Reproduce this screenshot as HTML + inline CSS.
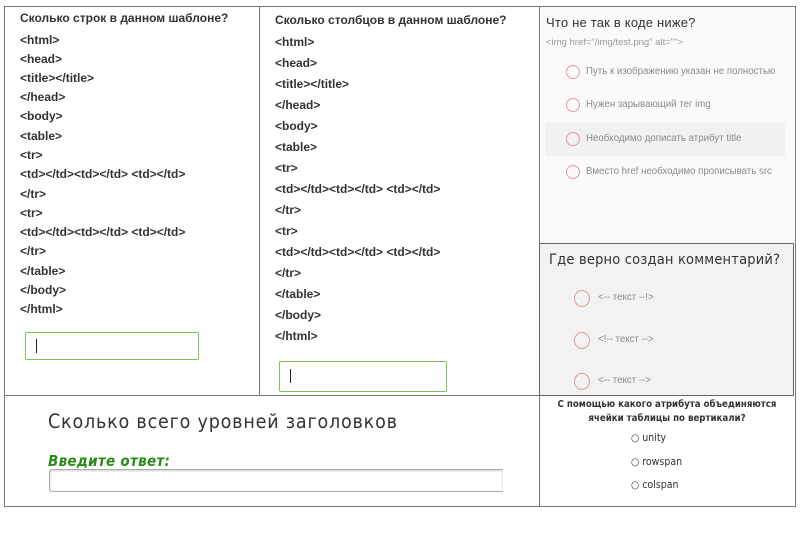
<!DOCTYPE html>
<html><head><meta charset="utf-8"><style>
body{margin:0;width:800px;height:540px;background:#fff;position:relative;font-family:"Liberation Sans",Arial,sans-serif;overflow:hidden}
.a{position:absolute;white-space:nowrap}
.c1{font-weight:bold;font-size:12px;color:#333;left:20px}
.c2{font-weight:bold;font-size:12px;color:#333;left:275px}
.line{position:absolute;background:#777}
.rc{position:absolute;border:1.3px solid #e29a9a;border-radius:50%;box-sizing:border-box}
.ot{font-size:9.7px;color:#8a8a8a}
</style></head><body>
<div style="position:absolute;left:4px;top:6px;width:790px;height:499px;border:1px solid #777"></div>
<div class="line" style="left:259px;top:6px;width:1px;height:390px"></div>
<div class="line" style="left:539px;top:6px;width:1px;height:500px"></div>
<div class="line" style="left:4px;top:395px;width:790px;height:1px"></div>

<div class="a c1" style="top:11px">Сколько строк в данном шаблоне?</div>
<div class="a c1" style="top:33px">&lt;html&gt;</div>
<div class="a c1" style="top:52px">&lt;head&gt;</div>
<div class="a c1" style="top:71px">&lt;title&gt;&lt;/title&gt;</div>
<div class="a c1" style="top:90px">&lt;/head&gt;</div>
<div class="a c1" style="top:109px">&lt;body&gt;</div>
<div class="a c1" style="top:129px">&lt;table&gt;</div>
<div class="a c1" style="top:148px">&lt;tr&gt;</div>
<div class="a c1" style="top:167px">&lt;td&gt;&lt;/td&gt;&lt;td&gt;&lt;/td&gt; &lt;td&gt;&lt;/td&gt;</div>
<div class="a c1" style="top:187px">&lt;/tr&gt;</div>
<div class="a c1" style="top:206px">&lt;tr&gt;</div>
<div class="a c1" style="top:225px">&lt;td&gt;&lt;/td&gt;&lt;td&gt;&lt;/td&gt; &lt;td&gt;&lt;/td&gt;</div>
<div class="a c1" style="top:244px">&lt;/tr&gt;</div>
<div class="a c1" style="top:264px">&lt;/table&gt;</div>
<div class="a c1" style="top:283px">&lt;/body&gt;</div>
<div class="a c1" style="top:302px">&lt;/html&gt;</div>
<div style="position:absolute;left:25px;top:332px;width:172px;height:26px;border:1.5px solid #7cc35a;border-radius:2px"></div>
<div style="position:absolute;left:36px;top:339px;width:1px;height:14px;background:#222"></div>

<div class="a c2" style="top:13px">Сколько столбцов в данном шаблоне?</div>
<div class="a c2" style="top:35px">&lt;html&gt;</div>
<div class="a c2" style="top:56px">&lt;head&gt;</div>
<div class="a c2" style="top:77px">&lt;title&gt;&lt;/title&gt;</div>
<div class="a c2" style="top:98px">&lt;/head&gt;</div>
<div class="a c2" style="top:119px">&lt;body&gt;</div>
<div class="a c2" style="top:140px">&lt;table&gt;</div>
<div class="a c2" style="top:161px">&lt;tr&gt;</div>
<div class="a c2" style="top:182px">&lt;td&gt;&lt;/td&gt;&lt;td&gt;&lt;/td&gt; &lt;td&gt;&lt;/td&gt;</div>
<div class="a c2" style="top:203px">&lt;/tr&gt;</div>
<div class="a c2" style="top:224px">&lt;tr&gt;</div>
<div class="a c2" style="top:245px">&lt;td&gt;&lt;/td&gt;&lt;td&gt;&lt;/td&gt; &lt;td&gt;&lt;/td&gt;</div>
<div class="a c2" style="top:266px">&lt;/tr&gt;</div>
<div class="a c2" style="top:287px">&lt;/table&gt;</div>
<div class="a c2" style="top:308px">&lt;/body&gt;</div>
<div class="a c2" style="top:329px">&lt;/html&gt;</div>
<div style="position:absolute;left:279px;top:361px;width:166px;height:29px;border:1.5px solid #7cc35a;border-radius:2px"></div>
<div style="position:absolute;left:290px;top:369px;width:1px;height:14px;background:#222"></div>

<div style="position:absolute;left:540px;top:7px;width:254px;height:236px;background:#fafafa"></div>
<div style="position:absolute;left:545px;top:123px;width:240px;height:33px;background:#f1f1f1"></div>
<div class="a" style="left:546px;top:15px;font-size:13px;color:#333;letter-spacing:0.2px">Что не так в коде ниже?</div>
<div class="a" style="left:546px;top:37px;font-size:9.5px;color:#999">&lt;img href="/img/test.png" alt=""&gt;</div>
<div class="rc" style="left:566px;top:65px;width:14px;height:14px"></div>
<div class="a ot" style="left:586px;top:66px">Путь к изображению указан не полностью</div>
<div class="rc" style="left:566px;top:98px;width:14px;height:14px"></div>
<div class="a ot" style="left:586px;top:99px">Нужен зарывающий тег img</div>
<div class="rc" style="left:566px;top:132px;width:14px;height:14px"></div>
<div class="a ot" style="left:586px;top:133px">Необходимо дописать атрибут title</div>
<div class="rc" style="left:566px;top:165px;width:14px;height:14px"></div>
<div class="a ot" style="left:586px;top:166px">Вместо href необходимо прописывать src</div>

<div style="position:absolute;left:539px;top:243px;width:253px;height:151px;background:#f2f2f2;border:1px solid #666"></div>
<div class="a" style="left:549px;top:252px;font-size:14.5px;color:#333;letter-spacing:0.2px;font-family:'DejaVu Sans Condensed','DejaVu Sans',sans-serif">Где верно создан комментарий?</div>
<div class="rc" style="left:574px;top:290px;width:16px;height:17px"></div>
<div class="a ot" style="left:598px;top:292px">&lt;-- текст --!&gt;</div>
<div class="rc" style="left:574px;top:332px;width:16px;height:17px"></div>
<div class="a ot" style="left:598px;top:334px">&lt;!-- текст --&gt;</div>
<div class="rc" style="left:574px;top:373px;width:16px;height:17px"></div>
<div class="a ot" style="left:598px;top:375px">&lt;-- текст --&gt;</div>

<div class="a" style="left:48px;top:410px;font-size:19.5px;letter-spacing:0.8px;color:#333;font-family:'DejaVu Sans Condensed','DejaVu Sans',sans-serif">Сколько всего уровней заголовков</div>
<div class="a" style="left:48px;top:452px;font-size:15px;letter-spacing:0.3px;color:#2a8a1a;font-weight:bold;font-style:italic;font-family:'DejaVu Sans Condensed','DejaVu Sans',sans-serif">Введите ответ:</div>
<div style="position:absolute;left:49px;top:469px;width:453px;height:21px;border:1px solid #aaa;border-right:none;border-radius:3px 0 0 3px;box-shadow:inset 0 1px 2px #ccc"></div>

<div class="a" style="left:540px;width:254px;top:398px;text-align:center;font-size:9.6px;line-height:13.5px;font-weight:bold;color:#333;font-family:'DejaVu Sans Condensed',sans-serif">С помощью какого атрибута объединяются<br>ячейки таблицы по вертикали?</div>
<div class="a" style="left:631px;top:432px;font-size:10.5px;color:#333;font-family:'DejaVu Sans Condensed',sans-serif">○ unity</div>
<div class="a" style="left:631px;top:456px;font-size:10.5px;color:#333;font-family:'DejaVu Sans Condensed',sans-serif">○ rowspan</div>
<div class="a" style="left:631px;top:479px;font-size:10.5px;color:#333;font-family:'DejaVu Sans Condensed',sans-serif">○ colspan</div>
</body></html>
